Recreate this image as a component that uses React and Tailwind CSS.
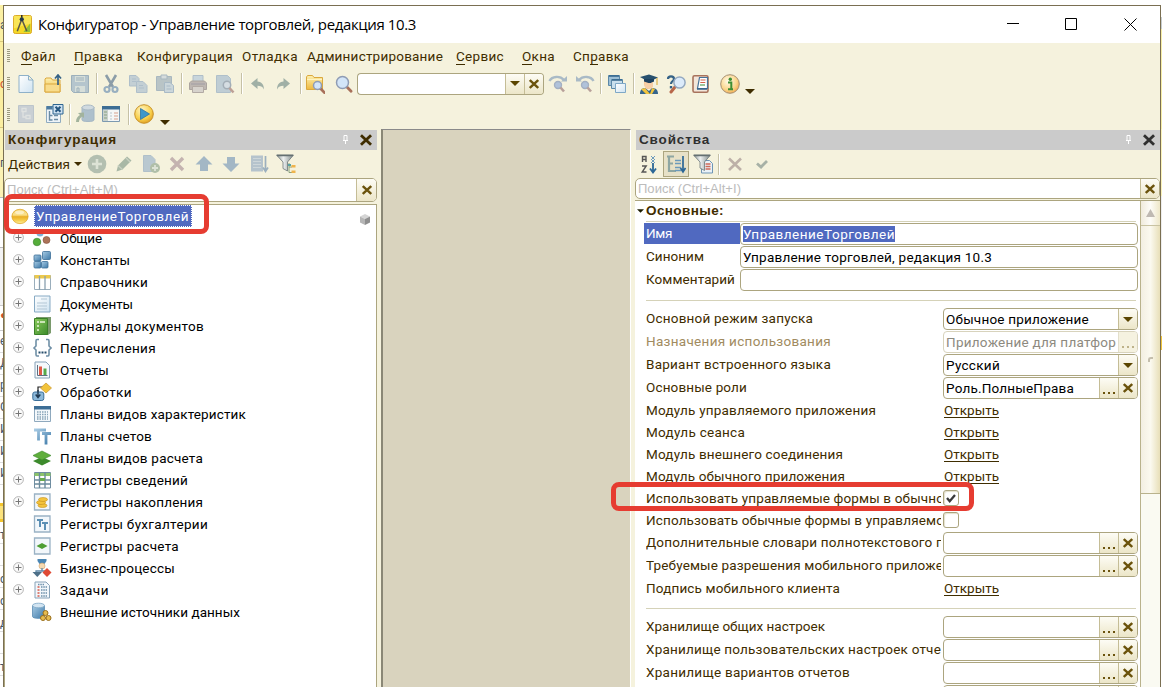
import React, { useLayoutEffect, useRef } from "react";

/* Text whose tracking is adjusted so that the run takes the given width. */
function T({ w, className = "", children }) {
  const ref = useRef(null);
  useLayoutEffect(() => {
    const el = ref.current;
    el.style.letterSpacing = "0px";
    const n = el.textContent.length;
    const natural = el.getBoundingClientRect().width;
    el.style.letterSpacing = (w - natural) / n + "px";
  }, [w, children]);
  return (
    <span ref={ref} className={"inline-block whitespace-pre " + className}>
      {children}
    </span>
  );
}

const Svg = ({ s = 20, children }) => (
  <svg width={s} height={s} viewBox="0 0 20 20" fill="none" className="block shrink-0">
    {children}
  </svg>
);

const Defs = () => (
  <svg width="0" height="0" className="absolute">
    <defs>
      <linearGradient id="page" x1="0" y1="0" x2="1" y2="1">
        <stop offset="0" stopColor="#fff" />
        <stop offset="1" stopColor="#cfe3f1" />
      </linearGradient>
      <linearGradient id="gold" x1="0" y1="0" x2="0" y2="1">
        <stop offset="0" stopColor="#fdf0b0" />
        <stop offset="1" stopColor="#eeb93e" />
      </linearGradient>
      <linearGradient id="blue" x1="0" y1="0" x2="1" y2="1">
        <stop offset="0" stopColor="#a8cbe4" />
        <stop offset="1" stopColor="#3d79a8" />
      </linearGradient>
      <linearGradient id="green" x1="0" y1="0" x2="1" y2="1">
        <stop offset="0" stopColor="#8ccb5c" />
        <stop offset="1" stopColor="#3b8a2a" />
      </linearGradient>
      <linearGradient id="steel" x1="0" y1="0" x2="1" y2="0">
        <stop offset="0" stopColor="#8d9696" />
        <stop offset=".4" stopColor="#eef1f1" />
        <stop offset="1" stopColor="#7d8888" />
      </linearGradient>
      <linearGradient id="pill" x1="0" y1="0" x2="0" y2="1">
        <stop offset="0" stopColor="#f5d878" />
        <stop offset=".4" stopColor="#fae08a" />
        <stop offset=".52" stopColor="#eaae24" />
        <stop offset=".75" stopColor="#f6cb48" />
        <stop offset="1" stopColor="#fdf0a0" />
      </linearGradient>
      <radialGradient id="orb" cx=".4" cy=".3" r=".8">
        <stop offset="0" stopColor="#fff6c8" />
        <stop offset=".6" stopColor="#f8cf4a" />
        <stop offset="1" stopColor="#d89018" />
      </radialGradient>
      <radialGradient id="info" cx=".4" cy=".35" r=".75">
        <stop offset="0" stopColor="#fffbe8" />
        <stop offset=".6" stopColor="#fbd68c" />
        <stop offset="1" stopColor="#f0a040" />
      </radialGradient>
    </defs>
  </svg>
);

const lens = (cx, cy, r) => (
  <>
    <path d={`M${cx + r * 0.7} ${cy + r * 0.7}l4.4 4.6`} stroke="#a8705a" strokeWidth="2.8" strokeLinecap="round" />
    <circle cx={cx} cy={cy} r={r} fill="#d3e5f8" stroke="#8f9cb4" strokeWidth="1.5" />
  </>
);

const I = {
  app: (
    <>
      <rect x=".5" y=".5" width="19" height="19" rx="2" fill="#f5d927" stroke="#d9a520" />
      <path d="M1 1h18v8L1 14z" fill="#fbe96c" opacity=".7" />
      <path d="M11 18l7-9v9z" fill="#8fbf3c" />
      <path d="M9 5L4.500 17M9.500 5L14.500 17" stroke="#5d5a45" strokeWidth="1.600" />
      <path d="M9.250 0v3" stroke="#222" strokeWidth="1.500" />
      <circle cx="9.250" cy="4.500" r="2.200" fill="#22384a" />
    </>
  ),
  fresh: (
    <path d="M3 1.500h9.500l4.500 4.500v12.500H3zM12.500 1.500V6H17" fill="url(#page)" stroke="#8eb1c9" />
  ),
  open: (
    <>
      <path d="M2 5l1-1h5l1.500 2H17v12H2z" fill="url(#gold)" stroke="#dba83e" />
      <path d="M2 10h15v8H2z" fill="#f8dc8c" stroke="#dba83e" />
      <path d="M15 11V2M12 4.500L15 1l3 3.500" stroke="#356286" strokeWidth="1.700" />
    </>
  ),
  save: (
    <>
      <path d="M1.500 1.500h17v17h-15l-2-2z" fill="#b5c5cd" stroke="#9db0bb" />
      <path d="M5 2h10v6H5zM5 12h10v6H5z" fill="#d6ded9" />
      <path d="M6 4h8M6 6h8M7 14h2v4H7z" stroke="#9db0bb" />
    </>
  ),
  cut: (
    <>
      <path d="M5 1l7 12M15 1L8 13" stroke="#8c9da8" strokeWidth="2.600" />
      <circle cx="6" cy="15.500" r="2.500" stroke="#98afc0" strokeWidth="2.200" />
      <circle cx="14" cy="15.500" r="2.500" stroke="#98afc0" strokeWidth="2.200" />
    </>
  ),
  copy: (
    <g fill="#c3cfd4" stroke="#afbfca">
      <path d="M1.500 1.500H8l3 3V12H1.500z" />
      <path d="M8.500 7.500H15l4 4v7H8.500z" />
      <path d="M4 5h4M4 7.500h4M11 11.500h4M11 14h5" />
    </g>
  ),
  paste: (
    <>
      <path d="M1.500 2.500h15v14h-15z" fill="#b9c4c6" stroke="#a9b8c0" />
      <path d="M6 1h6v4H6z" fill="#d6dcdc" stroke="#a9b8c0" />
      <path d="M9.500 8.500H15l3.500 3v7h-9z" fill="#cbd6da" stroke="#a9bac6" />
      <path d="M11.500 12h4M11.500 15h5" stroke="#a9bac6" />
    </>
  ),
  print: (
    <>
      <path d="M5 1.500h10V8H5z" fill="#c8d5dc" stroke="#b0bec8" />
      <path d="M1.500 9l2-2h13l2 2v6.500h-17z" fill="#bdb6b1" stroke="#aba49f" />
      <path d="M4.500 12.500h11v6h-11z" fill="#d6d2cc" stroke="#b2aaa4" />
      <path d="M3 10h14" stroke="#a09da4" />
    </>
  ),
  preview: (
    <>
      <path d="M1.500 1.500h11l3 3v14h-14z" fill="#bfcdd4" stroke="#b0c0ca" />
      <circle cx="12" cy="11" r="3.700" fill="#d5dde2" stroke="#a3aeb6" strokeWidth="1.500" />
      <path d="M14.500 14l4 4.500" stroke="#bda096" strokeWidth="2.600" />
    </>
  ),
  undo: <path d="M3 9.500L9.500 4v3.500C14 8 16 11 16 15.500c-1.500-3-3.500-3.700-6.500-3.700V15z" fill="#a0b0a6" />,
  redo: <path d="M17 9.500L10.500 4v3.500C6 8 4 11 4 15.500c1.500-3 3.500-3.700 6.500-3.700V15z" fill="#a0b0a6" />,
  folderFind: (
    <>
      <path d="M1.500 3l1-1.500h5l1.500 2h8.500v12h-16z" fill="url(#gold)" stroke="#dba83e" />
      <path d="M2 5.500h15" stroke="#fff3c0" />
      {lens(12.5, 11.5, 4)}
    </>
  ),
  zoom: lens(8.5, 8.5, 6),
  findNext: (
    <>
      <path d="M1.500 7C4 2 12 1.500 16 6" stroke="#a9bac6" strokeWidth="2.400" />
      <path d="M13 7.500h6V2z" fill="#a9bac6" />
      <circle cx="10" cy="11" r="3.500" fill="#b0c2da" stroke="#a3b0c2" strokeWidth="1.400" />
      <path d="M12.500 13.500l3.500 4" stroke="#b8a09a" strokeWidth="2.600" />
    </>
  ),
  findPrev: (
    <>
      <path d="M18.500 7C16 2 8 1.500 4 6" stroke="#a9bac6" strokeWidth="2.400" />
      <path d="M7 7.500H1V2z" fill="#a9bac6" />
      <circle cx="10" cy="11" r="3.500" fill="#b0c2da" stroke="#a3b0c2" strokeWidth="1.400" />
      <path d="M12.500 13.500l3.500 4" stroke="#b8a09a" strokeWidth="2.600" />
    </>
  ),
  windows: (
    <>
      <path d="M1.500 1.500h11v10h-11z" fill="#9dbfd6" stroke="#5b88a8" />
      <path d="M4.500 5.500h11v9h-11z" fill="#c9dfed" stroke="#5b88a8" />
      <path d="M8.500 9.500h10v9h-10z" fill="url(#page)" stroke="#7fa8c6" />
      <path d="M5 6h10M2 2h10" stroke="#33658c" strokeWidth="1.500" />
    </>
  ),
  scholar: (
    <>
      <path d="M5 6h9v4c0 4-2 5-4.500 5S5 13 5 9z" fill="#f5c79a" />
      <path d="M1 3l9-2.500L19 3.500 10 8z" fill="#28516e" />
      <path d="M5 5v2.500l6 2 4-2V5z" fill="#1d4260" />
      <path d="M6 8.500c2 1 6 1 8-.5V13l-4 2-4-2z" fill="#f7cfa6" />
      <path d="M1 20c0-4 2-6 5-6l4 3 3-3c4 0 6 2 6 6z" fill="#35658c" />
      <path d="M2 15l4-1 5 6H7zM13 14l3 1-3 5h-2z" fill="#f1c43e" />
      <path d="M18 4v7" stroke="#d7a52c" />
    </>
  ),
  help: (
    <>
      <path d="M2 5c0-3.500 6-3.500 6 0 0 2-3 2.200-3 5" stroke="#356286" strokeWidth="2.200" />
      <path d="M3.800 12h2.400v2.400H3.800z" fill="#356286" />
      <path d="M9 13l-4 5" stroke="#b8674a" strokeWidth="3" strokeLinecap="round" />
      <circle cx="13.500" cy="8.500" r="5.600" fill="#dcebfa" stroke="#94a9c0" strokeWidth="1.500" />
    </>
  ),
  book: (
    <>
      <rect x="2" y="1.700" width="15" height="16.600" rx="1.500" fill="#f3e6da" stroke="#a8735c" strokeWidth="1.600" />
      <path d="M8.500 3.500h8v11H6.500z" fill="#fff" stroke="#4a7398" strokeWidth="1.200" />
      <path d="M9.500 6h5M9.300 8.500h5" stroke="#d4624a" strokeWidth="1.200" />
      <path d="M9 11h5" stroke="#58a058" strokeWidth="1.200" />
      <path d="M6 15h10" stroke="#35628a" strokeWidth="1.500" />
    </>
  ),
  info: (
    <>
      <circle cx="10" cy="10" r="9.300" fill="url(#info)" stroke="#a58f73" />
      <circle cx="10.300" cy="5.300" r="1.700" fill="#3f8f33" />
      <path d="M8 8.500h3.300V15M8 15.200h5" stroke="#3f8f33" strokeWidth="2" />
    </>
  ),
  cfgOff: (
    <>
      <path d="M2.500 1.500h15v17h-15z" fill="#c9cfd4" stroke="#bcc5cb" />
      <path d="M6 4.500h4v3H6zM10 11.500h4v3h-4zM7 8v5h3" stroke="#dfe2e0" strokeWidth="1.300" />
    </>
  ),
  cfgX: (
    <>
      <path d="M2.500 2.500h14v16h-14z" fill="#eef4f9" stroke="#8fabc0" />
      <path d="M5.500 7v9h3M5.500 11.500h3M10 11.500h4M10 15.500h4" stroke="#6a8ba4" strokeWidth="1.400" />
      <path d="M2.500 2h6v3.500h-6z" fill="#4c7ba0" />
      <path d="M9 .5h10v9.500H9z" fill="#cfe2f1" stroke="#2d6590" />
      <path d="M11.500 2.700l5 5M16.500 2.700l-5 5" stroke="#245680" strokeWidth="2" />
    </>
  ),
  db: (
    <>
      <path d="M7 3v13c0 2 12 2 12 0V3" fill="#aec0cc" stroke="#a5b7c4" />
      <ellipse cx="13" cy="3.500" rx="6" ry="2.500" fill="#d0dae0" stroke="#a9b9c4" />
      <path d="M1 18c0-4 2-6 4-7L3 9l6-.500V14l-2-1.500C5 14 4 16 4 18z" fill="#a2b39d" />
    </>
  ),
  panel: (
    <>
      <path d="M1.500 2.500h17v15h-17z" fill="#f4f6f6" stroke="#7c99b0" />
      <path d="M1 2h18v3.500H1z" fill="#3c6d94" />
      <path d="M2 6h5v11H2z" fill="#c9d2cc" />
      <path d="M3 8h3M3 11h3M3 14h3" stroke="#87a080" />
      <path d="M9 9h2M9 12h2M9 15h2" stroke="#b9c4cc" />
      <path d="M13 9h4M13 12h4M13 15h4" stroke="#d7a08c" />
    </>
  ),
  play: (
    <>
      <circle cx="10" cy="10" r="9.300" fill="url(#orb)" stroke="#c8922a" />
      <path d="M6.500 4.500l9 5.500-9 5.500z" fill="#3f97c9" stroke="#2b74a4" strokeWidth=".8" />
    </>
  ),
  add: (
    <>
      <circle cx="10" cy="10" r="9.300" fill="#b3bfb0" />
      <path d="M10 5v10M5 10h10" stroke="#dde3d6" strokeWidth="2.600" />
    </>
  ),
  edit: (
    <>
      <path d="M2.500 17.500l1.500-6 9-9 4.500 4-9 9z" fill="#a9b8a6" />
      <path d="M4 11.500l4.500 4M12 4l4 4" stroke="#c9d1c2" strokeWidth="1.300" />
    </>
  ),
  addPage: (
    <>
      <path d="M2.500 1.500H10l4 4v12H2.500z" fill="#b9c8d0" stroke="#b0c0ca" />
      <circle cx="14" cy="14" r="5" fill="#b0bfa8" />
      <path d="M14 11v6M11 14h6" stroke="#dde3d6" strokeWidth="1.800" />
    </>
  ),
  del: <path d="M4 4l12 12M16 4L4 16" stroke="#c4b3b0" strokeWidth="3.400" />,
  up: <path d="M10 2l8.500 8.500H14V17H6v-6.500H1.500z" fill="#a3b7c5" />,
  down: <path d="M10 18l8.500-8.500H14V3H6v6.500H1.500z" fill="#a3b7c5" />,
  sort: (
    <>
      <path d="M2 1.500h12v16H2z" fill="#b5c3cc" />
      <path d="M4 4.500h8M4 7.500h8M4 10.500h8M4 13.500h8" stroke="#cdd6d9" />
      <path d="M16.500 2v14M14 13.500l2.500 4 2.500-4" stroke="#9cb0be" strokeWidth="1.700" />
    </>
  ),
  filterTree: (
    <>
      <path d="M.5 1h17l-6 7v9l-4.500-2.500V8z" fill="url(#steel)" stroke="#6c7779" strokeWidth=".8" />
      <path d="M1 1.500h16" stroke="#657072" strokeWidth="1.500" />
      <path d="M13 9v9.500h3M13 13h3" stroke="#8aa27c" />
      <path d="M15.500 11h4v2.500h-4zM15.500 16.500h4V19h-4z" fill="#efb44c" />
      <path d="M12 10h3v2h-3z" fill="#58a3a5" />
    </>
  ),
  az: (
    <>
      <path d="M3.500 8V2.500h3.500V8M3.500 5.500H7M3 12h4.200L3.200 18h4.300" stroke="#555" strokeWidth="1.400" />
      <path d="M14 9v9M11 14.500l3 4 3-4" stroke="#2c6796" strokeWidth="1.800" />
      <path d="M12 2l4 4M16 2l-4 4M12 5l4 4M16 5l-4 4" stroke="#6c9abc" />
    </>
  ),
  treeSort: (
    <>
      <path d="M1 2.500h7M3 3v14h7M3 9.500h4" stroke="#8ea6a2" strokeWidth="2.200" />
      <path d="M9 6.500h6M9 9.500h6M9 13.500h6M9 16.500h6" stroke="#6b9abb" strokeWidth="1.600" />
      <path d="M17 2v15M14.500 14l2.500 4 2.500-4" stroke="#2c6796" strokeWidth="1.700" />
    </>
  ),
  filterPage: (
    <>
      <path d="M8.500 6.500h8l3 3v9.500h-11z" fill="#eaf2f8" stroke="#6f95b5" />
      <path d="M.5 1h17l-6 7v8.500l-4.500-2.500V8z" fill="url(#steel)" stroke="#6c7779" strokeWidth=".8" />
      <path d="M1 1.500h16" stroke="#657072" strokeWidth="1.500" />
      <path d="M12.500 10h5M12.500 12.500h5M12.500 15h5" stroke="#d06a58" strokeWidth="1.300" />
    </>
  ),
  x2: <path d="M4 4.500l12 11.500M16 4.500L4 16" stroke="#bdb0a8" strokeWidth="2.600" />,
  check2: <path d="M5 9.500l4 3.500 6-6" stroke="#a7b1a6" strokeWidth="2.800" />,

  root: (
    <>
      <ellipse cx="10" cy="10.500" rx="9" ry="8" fill="url(#pill)" stroke="#dda21c" strokeWidth=".8" />
      <ellipse cx="9.500" cy="6" rx="5" ry="2" fill="#fff" opacity=".5" />
    </>
  ),
  common: (
    <>
      <circle cx="8" cy="5" r="3.500" fill="#7fb2d8" />
      <circle cx="5" cy="14" r="3.800" fill="#55ad3a" stroke="#35802a" strokeWidth=".6" />
      <circle cx="14.500" cy="12" r="3.500" fill="#ac7358" stroke="#855040" strokeWidth=".6" />
    </>
  ),
  consts: (
    <g fill="url(#blue)" stroke="#3c6f98" strokeWidth=".8">
      <rect x="10.500" y="1.500" width="8" height="8" rx="1" />
      <rect x="2" y="5" width="7" height="6" rx="1" />
      <rect x="2" y="11.500" width="7" height="6.500" rx="1" />
      <rect x="9.500" y="11.500" width="6.500" height="6.500" rx="1" />
    </g>
  ),
  catalogs: (
    <>
      <path d="M2.500 3.500h16v14h-16z" fill="#fff" stroke="#9aaebc" />
      <path d="M2.500 3h16v3.500h-16z" fill="#ecc94c" />
      <path d="M7.500 4v14M13 4v14" stroke="#8aa0b0" strokeWidth="1.300" />
    </>
  ),
  doc: (
    <>
      <path d="M2.500 2h15.500v16H2.500z" fill="url(#page)" stroke="#87aac4" />
      <path d="M9 5h6M5 9h10M5 12h10M5 15h10" stroke="#b3c7d5" />
    </>
  ),
  journal: (
    <>
      <path d="M4 1h15v16l-3 2H4z" fill="#7a9a6c" />
      <path d="M2.500 2.500h13v16h-13z" fill="url(#green)" stroke="#3a8128" />
      <path d="M5 6h2M8 6h5M5 10h2M5 14h2" stroke="#eaf6da" strokeWidth="1.400" />
    </>
  ),
  enums: (
    <>
      <path d="M7 1.500H5Q4 1.500 4 3v5L2 10l2 2v4.500q0 1.500 1 1.500h2M14 1.500h2q1 0 1 1.500v5l2 2-2 2v4.500q0 1.500-1 1.500h-2" stroke="#6f8fa6" strokeWidth="1.600" />
      <path d="M6.500 14.500h2M9.500 14.500h2M12.500 14.500h2" stroke="#274d6b" strokeWidth="1.800" />
    </>
  ),
  report: (
    <>
      <path d="M3 2h11l3.500 3.500V18H3z" fill="#f5f9fc" stroke="#87a2b8" />
      <path d="M5.500 5v10.500h10" stroke="#5f6f80" />
      <path d="M7 6.500h3V15H7z" fill="#e05a48" />
      <path d="M11.500 8.500h3V15h-3z" fill="#57a94a" />
    </>
  ),
  process: (
    <>
      <path d="M6 12V5h6" stroke="#222" strokeWidth="1.200" />
      <path d="M14 1l5.500 5-5.500 5L8.500 6z" fill="#f2c33a" stroke="#c8952a" strokeWidth=".7" />
      <rect x=".8" y="10" width="11" height="8.500" rx="2" fill="#8bb8da" stroke="#3a6e99" />
      <path d="M6 8v7M3.700 12.500l2.300 3 2.300-3" stroke="#1e3850" strokeWidth="1.400" />
    </>
  ),
  chart: (
    <>
      <path d="M2.500 2.500h16v15h-16z" fill="#f4f8fb" stroke="#8fa9be" />
      <path d="M2 2h17v3.500H2z" fill="#3d6e96" />
      <path d="M5 8h11M5 10.500h11M5 13h11M5 15h11" stroke="#86a3b8" strokeDasharray="1.500 1" strokeWidth="1.500" />
    </>
  ),
  accounts: <path d="M2 4h12M6.500 4v10.500M10 7.500h9M14 7.500v11" stroke="url(#blue)" strokeWidth="2.800" />,
  calc: (
    <>
      <path d="M1 13l9-4 9 4-9 4.500z" fill="#3c8a2c" />
      <path d="M1 7.500L10 3l9 4.500L10 12z" fill="#5fae3c" stroke="#3c8a2c" strokeWidth=".6" />
    </>
  ),
  infoReg: (
    <>
      <path d="M2.500 2.500h16v15.500h-16z" fill="#fff" stroke="#708ea2" />
      <path d="M2.500 3h16v3h-16z" fill="#8cc46a" />
      <path d="M7.500 2.500V18M13 2.500V18M2.500 10h16M2.500 14h16" stroke="#6b8b9c" strokeWidth="1.400" />
      <path d="M8 8h5v3H8z" fill="#68a94e" />
    </>
  ),
  accum: (
    <>
      <path d="M2.500 2h15.500v16H2.500z" fill="#f2f7fb" stroke="#9ab2c5" strokeWidth="1.300" />
      <g fill="#f3c43c" stroke="#c48e1e" strokeWidth=".6">
        <ellipse cx="10.500" cy="13.500" rx="4.500" ry="2" />
        <ellipse cx="9" cy="10.500" rx="4.500" ry="2" />
        <ellipse cx="11" cy="7.500" rx="4.500" ry="2" />
      </g>
    </>
  ),
  accReg: (
    <>
      <path d="M2.500 2h15.500v16H2.500z" fill="#f2f7fb" stroke="#9ab2c5" strokeWidth="1.300" />
      <path d="M5 6h6M8 6v7M10 9h6M13 9v7" stroke="#5b8fb4" strokeWidth="2" />
    </>
  ),
  calcReg: (
    <>
      <path d="M2.500 2h15.500v16H2.500z" fill="#f2f7fb" stroke="#9ab2c5" strokeWidth="1.300" />
      <path d="M4.500 10L10 7l5.500 3L10 13z" fill="#4e9e34" />
    </>
  ),
  bp: (
    <>
      <path d="M5.500 1h9v2l-2 3h-5l-2-3z" fill="#4a86b4" />
      <circle cx="10" cy="8" r="3" fill="#f6d9b0" stroke="#cfa36c" strokeWidth=".6" />
      <path d="M10 10v3M4 15v-2h11v2" stroke="#5d88a8" strokeWidth="1.300" />
      <path d="M.5 14h9.500l-4.700 5z" fill="#4d6f88" />
      <path d="M15 10l4.500 4.500L15 19l-4.500-4.500z" fill="#df4a34" />
    </>
  ),
  tasks: (
    <>
      <path d="M3 2h11l3.500 3.500V18H3z" fill="#f2f7fb" stroke="#87a2b8" />
      <path d="M5.500 7h2M5.500 10h2M5.500 13h2M5.500 16h2" stroke="#d65b4c" strokeWidth="1.500" />
      <path d="M9 7h6M9 10h6M9 13h6M9 16h6M6 4.500h6" stroke="#6d90ab" strokeWidth="1.300" strokeDasharray="1.500 .8" />
    </>
  ),
  ext: (
    <>
      <path d="M.5 3.500v11c0 2.500 12 2.500 12 0v-11" fill="url(#blue)" stroke="#5b8cb2" strokeWidth=".8" />
      <ellipse cx="6.500" cy="3.500" rx="6" ry="2.300" fill="#d3e5f2" stroke="#7aa5c4" strokeWidth=".8" />
      <g fill="#e6bc50" stroke="#9a6f1c">
        <circle cx="13.500" cy="11" r="2.500" />
        <circle cx="11" cy="16" r="2.500" />
        <circle cx="16.500" cy="16" r="2.500" />
      </g>
    </>
  ),
};

const Slot = ({ icon, className }) => (
  <div className={"flex shrink-0 " + className}>
    <Svg>{I[icon]}</Svg>
  </div>
);
const Sep = ({ className }) => (
  <div className={"flex h-[21px] shrink-0 " + className}>
    <div className="w-px bg-[#c6c1a6]" />
    <div className="w-px bg-white" />
  </div>
);
const Grip = () => (
  <div className="flex w-[12px] shrink-0 flex-col gap-px pl-[3px]">
    {[0, 1, 2, 3, 4, 5, 6].map((i) => (
      <div key={i} className="h-px w-[3px] bg-[#9c9980]" />
    ))}
  </div>
);
const Tri = ({ className = "", c = "#5a4500" }) => (
  <svg width="10" height="5" viewBox="0 0 10 5" className={"block shrink-0 " + className}>
    <path d="M0 0h10L5 5z" fill={c} />
  </svg>
);
const Cross = ({ s = 10, c = "#6b530c", sw = 2.4 }) => (
  <svg width={s} height={s} viewBox="0 0 10 10" className="block shrink-0">
    <path d="M.8 1l8.400 8M9.200 1L.8 9" stroke={c} strokeWidth={sw} />
  </svg>
);
const Dots = ({ off }) => (
  <div className={"mt-[10px] flex gap-[3px] " + (off ? "opacity-40" : "")}>
    <div className="size-[2px] bg-[#6b530c]" />
    <div className="size-[2px] bg-[#6b530c]" />
    <div className="size-[2px] bg-[#6b530c]" />
  </div>
);

const Menu = ({ w, cls, t, u = 0 }) => (
  <div className={"shrink-0 " + cls}>
    <T w={w}>
      {u < 0 ? t : <>{t.slice(0, u)}<span className="border-b border-[#3f2d00]">{t[u]}</span>{t.slice(u + 1)}</>}
    </T>
  </div>
);

const btn = "flex items-center justify-center border-l border-[#c5bd96] bg-linear-to-b from-[#fdfcf5] to-[#ece6c8]";

function Field({ kind, text, w, off, selected, className }) {
  return (
    <div className={"flex h-[22px] overflow-hidden rounded-[4px] border bg-white " + (off ? "border-[#d8d3bc] " : "border-[#aca57f] ") + className}>
      <div className={"flex min-w-0 flex-1 items-center overflow-hidden pl-[2px] " + (off ? "text-[#8d8a80]" : "text-black")}>
        {text && (
          <T w={w} className={selected ? "h-[16px] bg-[#5069c0] leading-[16px] text-white" : ""}>
            {text}
          </T>
        )}
      </div>
      {kind === "select" && <div className={"w-[19px] " + btn}><Tri /></div>}
      {kind === "dots" && <div className={"w-[19px] border-l-[#e3dfcb] bg-none! bg-[#f5f2e0] " + btn}><Dots off /></div>}
      {kind === "ref" && (
        <>
          <div className={"w-[19px] " + btn}><Dots /></div>
          <div className={"w-[19px] " + btn}><Cross /></div>
        </>
      )}
    </div>
  );
}

const tree = [
  ["common", "Общие", 42, 1],
  ["consts", "Константы", 70, 1],
  ["catalogs", "Справочники", 88, 1],
  ["doc", "Документы", 73, 1],
  ["journal", "Журналы документов", 144, 1],
  ["enums", "Перечисления", 96, 1],
  ["report", "Отчеты", 49, 1],
  ["process", "Обработки", 72, 1],
  ["chart", "Планы видов характеристик", 186, 1],
  ["accounts", "Планы счетов", 92, 0],
  ["calc", "Планы видов расчета", 143, 0],
  ["infoReg", "Регистры сведений", 128, 1],
  ["accum", "Регистры накопления", 143, 1],
  ["accReg", "Регистры бухгалтерии", 148, 0],
  ["calcReg", "Регистры расчета", 119, 0],
  ["bp", "Бизнес-процессы", 115, 1],
  ["tasks", "Задачи", 49, 1],
  ["ext", "Внешние источники данных", 180, 0],
];

const main = [
  ["Основной режим запуска", 167, "select", "Обычное приложение", 143],
  ["Назначения использования", 185, "dots", "Приложение для платфор", 170],
  ["Вариант встроенного языка", 185, "select", "Русский", 54],
  ["Основные роли", 101, "ref", "Роль.ПолныеПрава", 128],
  ["Модуль управляемого приложения", 230, "link"],
  ["Модуль сеанса", 99, "link"],
  ["Модуль внешнего соединения", 197, "link"],
  ["Модуль обычного приложения", 199, "link"],
  ["Использовать управляемые формы в обычно", 298, "checked"],
  ["Использовать обычные формы в управляемо", 298, "check"],
  ["Дополнительные словари полнотекстового п", 298, "ref"],
  ["Требуемые разрешения мобильного приложе", 297, "ref"],
  ["Подпись мобильного клиента", 194, "link"],
];
const stores = [
  ["Хранилище общих настроек", 179, "ref"],
  ["Хранилище пользовательских настроек отче", 295, "ref"],
  ["Хранилище вариантов отчетов", 204, "ref"],
  ["", 0, "ref"],
];

function Row({ r }) {
  const [label, w, kind, text, tw] = r;
  const field = kind === "select" || kind === "dots" || kind === "ref";
  const off = kind === "dots";
  return (
    <div className={"flex shrink-0 " + (field ? "h-[23px]" : "h-[22px]")}>
      <div className={"flex h-[22px] w-[295px] items-center overflow-hidden pb-[2px] " + (off ? "text-[#a18b60]" : "")}>
        {label && <T w={w}>{label}</T>}
      </div>
      {field && <Field kind={kind} text={text} w={tw} off={off} className="ml-[2px] w-[195px]" />}
      {kind === "link" && (
        <div className="ml-[3px] flex h-[22px] items-center pb-[2px]">
          <T w={55} className="h-[15px] border-b border-[#3f2d00] leading-[15px]">Открыть</T>
        </div>
      )}
      {(kind === "check" || kind === "checked") && (
        <div className="ml-[2px] mt-[2px] flex size-4 items-center justify-center rounded-[3px] border border-[#aca57f] bg-white shadow-[inset_1px_1px_1px_#e4e0cc]">
          {kind === "checked" && (
            <svg width="10" height="9" viewBox="0 0 10 9"><path d="M1 4l2.700 3.200L9 1" stroke="#3a3a3a" strokeWidth="2.300" fill="none" /></svg>
          )}
        </div>
      )}
    </div>
  );
}

const PanelHead = ({ title, w, dark, className }) => (
  <div className={"flex h-5 shrink-0 items-center bg-[#cbcbcb] pb-px pr-[5px] font-['Liberation_Sans',sans-serif] font-bold " + className}>
    <T w={w} className={dark ? "text-[#2f2f2f]" : "text-[#3f2d00]"}>{title}</T>
    <svg width="5" height="9" viewBox="0 0 5 9" className="ml-auto"><path d="M1 .5h3v5H1zM0 5.500h5M2.500 6v3" stroke="#fff" fill="none" /></svg>
    <div className="ml-[12px]"><Cross s={12} c={dark ? "#2f2f2f" : "#3f2d00"} sw={2.4} /></div>
  </div>
);

const leftStrip = ["е", "Д", "р", "С", "И", "И", "И"];

export default function App() {
  return (
    <div className="relative flex h-[687px] w-[1162px] overflow-hidden bg-white pt-[5px] font-['Roboto','Liberation_Sans',sans-serif] text-[13.5px] leading-[18px] text-[#3f2d00]">
      <Defs />

      {/* window behind, left edge */}
      <div className="flex w-[3px] shrink-0 flex-col overflow-hidden text-[12px] text-[#46586b]">
        <div className="h-[37px] border-b border-[#d9c87c] bg-[#fbf0a4] pt-[11px]">а</div>
        <div className="h-[86px] border-b border-[#d9c87c] bg-[#fbeea0] pt-[33px] text-[#d0502c]">о</div>
        <div className="h-[70px] border-b border-[#bbb] bg-[#fbf2b4] pt-[26px]">п</div>
        <div className="h-[50px] border-b border-[#bbb] bg-white" />
        <div className="h-[58px] border-b border-[#ccc] bg-[#f3f3f3]" />
        <div className="h-[25px] border-b border-[#ccc] bg-white text-[#d0502c]">●</div>
        {leftStrip.map((s, i) => (
          <div key={i} className="h-[22px] shrink-0 border-b border-[#ddd] bg-white pt-px">{s}</div>
        ))}
        <div className="mt-[18px] h-[19px] shrink-0 border-y-[3px] border-[#f4c52c] bg-[#fbe27c]" />
        {["т", "", "с", "с", "д", "", "т"].map((s, i) => (
          <div key={i} className="h-[22px] shrink-0 border-b border-[#ddd] bg-white pt-[4px]">{s}</div>
        ))}
      </div>

      <div className="flex w-[1158px] shrink-0 flex-col border-x border-t border-[#7a6f52] bg-[#f5f2dd]">
        {/* title bar */}
        <div className="flex h-[37px] shrink-0 items-center bg-white pb-px pl-[9px] text-black">
          <Svg s={19}>{I.app}</Svg>
          <T w={378} className="ml-[6px] font-['Open_Sans','Noto_Sans',sans-serif] text-[15px] leading-5">
            Конфигуратор - Управление торговлей, редакция 10.3
          </T>
          <svg width="130" height="14" viewBox="0 0 130 14" fill="none" stroke="#000" className="ml-auto mr-[23px]">
            <path d="M0 6.500h12M58.500 1.500h11v11h-11zM117.500 1.500l12 12M129.500 1.500l-12 12" />
          </svg>
        </div>

        {/* menu */}
        <div className="flex h-[27px] shrink-0 items-center pb-[2px]">
          <Grip />
          <Menu cls="ml-[5px] w-[53px]" w={35} t="Файл" />
          <Menu cls="w-[63px]" w={49} t="Правка" />
          <Menu cls="w-[105px]" w={96} t="Конфигурация" u={-1} />
          <Menu cls="w-[65px]" w={56} t="Отладка" u={-1} />
          <Menu cls="w-[149px]" w={136} t="Администрирование" u={-1} />
          <Menu cls="w-[66px]" w={48} t="Сервис" />
          <Menu cls="w-[51px]" w={33} t="Окна" />
          <Menu cls="w-[60px]" w={56} t="Справка" u={2} />
        </div>

        {/* toolbars */}
        <div className="flex h-[29px] shrink-0 items-center pb-[2px]">
          <Grip />
          <Slot icon="fresh" className="w-[27px]" />
          <Slot icon="open" className="w-[27px]" />
          <Slot icon="save" className="w-[26px]" />
          <Sep className="w-[5px]" />
          <Slot icon="cut" className="w-[27px]" />
          <Slot icon="copy" className="w-[27px]" />
          <Slot icon="paste" className="w-[26px]" />
          <Sep className="w-[7px]" />
          <Slot icon="print" className="w-[27px]" />
          <Slot icon="preview" className="w-[26px]" />
          <Sep className="w-[7px]" />
          <Slot icon="undo" className="w-[25px]" />
          <Slot icon="redo" className="w-[27px]" />
          <Sep className="w-[5px]" />
          <Slot icon="folderFind" className="w-[29px]" />
          <Slot icon="zoom" className="w-[23px]" />
          <Field kind="none" className="w-[148px] rounded-r-none border-r-0" />
          <div className="mr-[4px] flex h-[22px] w-[39px] overflow-hidden rounded-r-[4px] border border-l-0 border-[#aca57f]">
            <div className={"w-[19px] " + btn}><Tri /></div>
            <div className={"w-[19px] " + btn}><Cross /></div>
          </div>
          <Slot icon="findNext" className="w-[27px]" />
          <Slot icon="findPrev" className="w-[25px]" />
          <Sep className="w-[7px]" />
          <Slot icon="windows" className="w-[26px]" />
          <Sep className="w-[6px]" />
          <Slot icon="scholar" className="w-[27px]" />
          <Slot icon="help" className="w-[25px]" />
          <Slot icon="book" className="w-[29px]" />
          <Slot icon="info" className="w-[25px]" />
          <Tri c="#3f2d00" className="mt-[16px]" />
        </div>
        <div className="flex h-[30px] shrink-0 items-center">
          <Grip />
          <Slot icon="cfgOff" className="w-[28px]" />
          <Slot icon="cfgX" className="w-[25px]" />
          <Sep className="w-[6px]" />
          <Slot icon="db" className="w-[26px]" />
          <Slot icon="panel" className="w-[27px]" />
          <Sep className="w-[6px]" />
          <Slot icon="play" className="w-[26px]" />
          <Tri c="#3f2d00" className="mt-[16px]" />
        </div>

        <div className="flex min-h-0 flex-1">
          {/* configuration panel */}
          <div className="flex w-[373px] shrink-0 flex-col pt-px">
            <PanelHead title="Конфигурация" w={109} className="ml-px pl-[3px]" />
            <div className="flex h-[28px] shrink-0 items-center pl-[4px]">
              <T w={62}>Действия</T>
              <Tri c="#3f2d00" className="ml-[4px] mr-[5px] h-[4px] w-[8px]" />
              <Slot icon="add" className="w-[27px]" />
              <Slot icon="edit" className="w-[27px]" />
              <Slot icon="addPage" className="w-[26px]" />
              <Slot icon="del" className="w-[27px]" />
              <Slot icon="up" className="w-[27px]" />
              <Slot icon="down" className="w-[28px]" />
              <Slot icon="sort" className="w-[27px]" />
              <Slot icon="filterTree" className="w-[20px]" />
            </div>
            <div className="flex h-[24px] shrink-0 overflow-hidden rounded-t-[5px] rounded-br-[5px] border border-[#aca57f] bg-white">
              <div className="flex flex-1 items-center pl-[2px] font-['Liberation_Sans'] text-[13px] text-[#bcbcbc]">
                <T w={111}>Поиск (Ctrl+Alt+M)</T>
              </div>
              <div className={"w-[20px] " + btn}><Cross /></div>
            </div>
            <div className="mt-[2px] flex flex-1 flex-col border-x border-t border-[#aca57f] bg-white text-black">
              <div className="flex h-[22px] shrink-0 items-center pl-[6px]">
                <Svg s={18}>{I.root}</Svg>
                <div className="ml-[5px] flex h-[22px] items-center border border-dotted border-white bg-[#5069c0] pl-px pr-[2px] text-white">
                  <T w={153}>УправлениеТорговлей</T>
                </div>
                <svg width="10" height="11" viewBox="0 0 10 11" className="ml-auto mr-[6px] mt-[7px]">
                  <path d="M0 2.500L5 0l5 2.500L5 5z" fill="#d5d5d5" />
                  <path d="M0 2.500L5 5v6L0 8.500z" fill="#b5b5b5" />
                  <path d="M10 2.500L5 5v6l5-2.500z" fill="#8f8f8f" />
                </svg>
              </div>
              {tree.map(([ic, t, w, ex]) => (
                <div key={t} className="flex h-[22px] shrink-0 items-center pl-[8px]">
                  <div className="w-[19px] pb-px">
                    {ex ? (
                      <svg width="11" height="11" viewBox="0 0 11 11" fill="none">
                        <circle cx="5.500" cy="5.500" r="4.900" stroke="#b4b4b4" fill="#fafafa" />
                        <path d="M5.500 2.500v6M2.500 5.500h6" stroke="#777" />
                      </svg>
                    ) : null}
                  </div>
                  <Svg>{I[ic]}</Svg>
                  <T w={w} className="ml-[8px]">{t}</T>
                </div>
              ))}
            </div>
          </div>

          {/* workspace */}
          <div className="ml-[4px] w-[250px] shrink-0 border-l-2 border-r border-t border-l-[#8a8776] border-r-white border-t-[#8a8a8a] bg-[#d9d3be]" />

          {/* properties panel */}
          <div className="ml-[4px] flex min-w-0 flex-1 flex-col pt-px">
            <PanelHead title="Свойства" w={71} dark className="ml-px pl-[3px]" />
            <div className="flex h-[28px] shrink-0 items-center pl-[4px]">
              <Slot icon="az" className="w-[24px]" />
              <div className="mr-[4px] flex size-[26px] items-center justify-center border border-[#aca57f] bg-[#e7e1c7]">
                <Svg>{I.treeSort}</Svg>
              </div>
              <Slot icon="filterPage" className="w-[25px]" />
              <Sep className="w-[7px]" />
              <Slot icon="x2" className="w-[27px]" />
              <Slot icon="check2" className="w-[20px]" />
            </div>
            <div className="flex h-[21px] shrink-0 overflow-hidden rounded-[5px] border border-[#aca57f] bg-white">
              <div className="flex flex-1 items-center pl-[2px] font-['Liberation_Sans'] text-[13px] text-[#bcbcbc]">
                <T w={103}>Поиск (Ctrl+Alt+I)</T>
              </div>
              <div className={"w-[19px] " + btn}><Cross /></div>
            </div>
            <div className="mt-px flex min-h-0 flex-1 border-t border-[#aca57f] bg-white">
              <div className="flex min-w-0 flex-1 flex-col">
                <div className="flex h-5 shrink-0 items-center pl-[2px] font-['Liberation_Sans',sans-serif] font-bold">
                  <Tri c="#1c1c00" className="h-[4px] w-[7px]" />
                  <T w={78} className="ml-[2px]">Основные:</T>
                </div>
                <div className="ml-[11px] mr-[4px] h-px shrink-0 bg-[#d5d2b8]" />
                <div className="mt-px flex h-[23px] shrink-0 pl-[9px]">
                  <div className="flex h-[21px] w-[96px] items-center bg-[#5069c0] pb-px pl-[2px] text-white"><T w={26}>Имя</T></div>
                  <Field text="УправлениеТорговлей" w={152} selected className="w-[398px]" />
                </div>
                <div className="flex h-[23px] shrink-0 pl-[11px]">
                  <div className="flex h-[22px] w-[94px] items-center pb-[2px]"><T w={58}>Синоним</T></div>
                  <Field text="Управление торговлей, редакция 10.3" w={249} className="w-[398px]" />
                </div>
                <div className="flex h-[22px] shrink-0 pl-[11px]">
                  <div className="flex h-[22px] w-[94px] items-center pb-[2px]"><T w={89}>Комментарий</T></div>
                  <Field className="w-[398px]" />
                </div>
                <div className="mb-[7px] ml-[11px] mr-[4px] mt-[9px] h-px shrink-0 bg-[#d5d2b8]" />
                <div className="flex shrink-0 flex-col pl-[11px]">
                  {main.map((r) => <Row key={r[0]} r={r} />)}
                </div>
                <div className="mb-[7px] ml-[11px] mr-[4px] mt-[8px] h-px shrink-0 bg-[#d5d2b8]" />
                <div className="flex shrink-0 flex-col pl-[11px]">
                  {stores.map((r, i) => <Row key={i} r={r} />)}
                </div>
              </div>
              {/* scrollbar */}
              <div className="flex w-[20px] shrink-0 flex-col border-l border-[#b9b28c] bg-[#fafaf2]">
                <div className="flex h-[25px] shrink-0 items-center justify-center border-b border-[#c9c3a2] bg-linear-to-r from-[#f0ebdc] via-[#fdfcf8] to-[#eee7c8]">
                  <svg width="9" height="8" viewBox="0 0 9 8"><path d="M4.500 0L9 8H0z" fill="#bfb9b2" /></svg>
                </div>
                <div className="flex h-[268px] shrink-0 items-center justify-center border-b border-[#b9b28c] bg-linear-to-r from-[#f3efe2] via-[#fbf9ef] to-[#e8dfb8]">
                  <div className="h-[5px] w-[5px] rounded-tl-[3px] border-l-2 border-t-2 border-[#c4beac]" />
                </div>
              </div>
            </div>
          </div>
        </div>
      </div>

      {/* window behind, right edge */}
      <div className="flex w-px shrink-0 flex-col bg-white">
        <div className="h-[12px] bg-white" />
        <div className="h-[12px] bg-[#c7cdd0]" />
        <div className="h-[100px] bg-[#f7eea6]" />
        <div className="h-[67px] bg-[#fbf3b8]" />
        <div className="h-[140px] bg-[#ededed]" />
        <div className="h-[14px] bg-[#f0c53c]" />
      </div>

      {/* highlight frames */}
      <div className="absolute left-[4px] top-[194px] h-[40px] w-[205px] rounded-[8px] border-[5px] border-[#e63c31]" />
      <div className="absolute left-[611px] top-[482px] h-[29px] w-[363px] rounded-[8px] border-[5px] border-[#e63c31]" />
    </div>
  );
}
